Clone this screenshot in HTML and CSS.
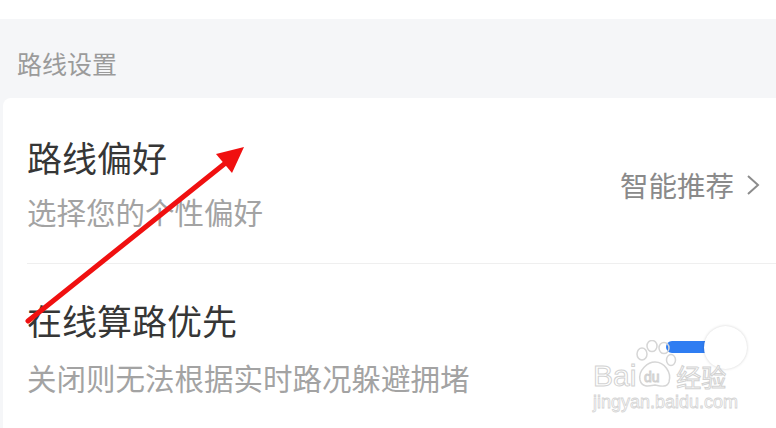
FILE: index.html
```html
<!DOCTYPE html>
<html lang="zh-CN">
<head>
<meta charset="utf-8">
<link rel="stylesheet" href="styles.css">
</head>
<body>
<div class="page">
  <div class="topband"></div>
  <div class="section-head">路线设置</div>
  <div class="card">
    <div class="row">
      <div class="texts">
        <div class="title">路线偏好</div>
        <div class="sub">选择您的个性偏好</div>
      </div>
      <div class="value">智能推荐<svg class="chev" width="14" height="24" viewBox="0 0 14 24"><path d="M2 3 L12 12 L2 21" fill="none" stroke="#8c8c8c" stroke-width="2"/></svg></div>
    </div>
    <div class="row last">
      <div class="texts">
        <div class="title">在线算路优先</div>
        <div class="sub">关闭则无法根据实时路况躲避拥堵</div>
      </div>
      <div class="toggle">
        <span class="track"></span>
        <span class="knob"></span>
      </div>
    </div>
  </div>

  <div class="watermark">
    <div class="wm-top"><span class="wm-bai">Bai</span><svg class="paw" width="46" height="50" viewBox="0 0 46 50"><g fill="none" stroke="#d6d6d6" stroke-width="1.5"><ellipse cx="10" cy="14" rx="5" ry="6"/><ellipse cx="20" cy="6" rx="5" ry="5.5"/><ellipse cx="32" cy="8" rx="5" ry="5.5"/><ellipse cx="39" cy="20" rx="4.5" ry="5.5"/><path d="M8 40 C6 30 16 22 23 22 C32 22 40 32 37 42 C35 48 28 46 23 45 C17 46 10 48 8 40 Z"/></g><text x="12" y="42" font-family="Liberation Sans, sans-serif" font-size="14" fill="#fff" stroke="#cfcfcf" stroke-width="1">du</text></svg><span class="wm-cn">经验</span></div>
    <div class="wm-url">jingyan.baidu.com</div>
  </div>

  <svg class="arrow" width="776" height="428" viewBox="0 0 776 428">
    <line x1="28" y1="321" x2="228" y2="161" stroke="#f01010" stroke-width="5" stroke-linecap="round"/>
    <polygon points="244,147 216,154 232,173" fill="#f01010"/>
  </svg>
</div>
</body>
</html>
```
FILE: styles.css
```css
* { box-sizing: border-box; }
html, body { margin: 0; padding: 0; }
body {
  width: 776px;
  height: 428px;
  overflow: hidden;
  background: #ffffff;
  font-family: "Noto Sans CJK SC", "Noto Sans", sans-serif;
}
.page {
  position: relative;
  width: 776px;
  height: 428px;
  background: #f5f6f8;
  overflow: hidden;
}
.topband {
  height: 19px;
  background: #ffffff;
}
.section-head {
  height: 79px;
  padding-left: 17px;
  display: flex;
  align-items: center;
  padding-top: 8px;
  font-size: 25px;
  color: #9b9b9b;
}
.card {
  margin-left: 3px;
  background: #ffffff;
  border-radius: 8px 0 0 0;
  padding-left: 24px;
  height: 340px;
}
.row {
  display: flex;
  align-items: center;
  height: 166px;
  border-bottom: 1px solid #efefef;
  padding-right: 14px;
}
.row.last { border-bottom: none; }
.texts {
  flex: 1;
  display: flex;
  flex-direction: column;
  gap: 17px;
}
.title {
  font-size: 35px;
  line-height: 40px;
  color: #363636;
  margin-top: 4px;
}
.sub {
  font-size: 29.5px;
  line-height: 34px;
  color: #a3a3a3;
}
.row.last .title { margin-top: 0px; }
.row.last .texts { gap: 20px; }
.value {
  display: flex;
  align-items: center;
  gap: 12px;
  font-size: 28.5px;
  color: #8a8a8a;
  margin-top: 8px;
  margin-right: 2px;
}
.chev { display: block; }
.toggle {
  position: relative;
  width: 82px;
  height: 44px;
  margin-right: 14px;
  margin-top: 2px;
}
.track {
  position: absolute;
  left: 0;
  top: 15px;
  width: 44px;
  height: 12px;
  background: #2f7df2;
  border-radius: 6px 0 0 6px;
}
.knob {
  position: absolute;
  left: 38px;
  top: 0;
  width: 43px;
  height: 43px;
  border-radius: 50%;
  background: #ffffff;
  box-shadow: 0 0 3px rgba(0,0,0,0.18);
}
.watermark {
  position: absolute;
  left: 593px;
  top: 340px;
  width: 150px;
  pointer-events: none;
}
.wm-top {
  display: flex;
  align-items: flex-end;
  height: 52px;
}
.wm-bai, .wm-cn {
  font-family: "Liberation Sans", sans-serif;
  font-size: 30px;
  line-height: 32px;
  color: rgba(255,255,255,0.7);
  -webkit-text-stroke: 1px #d2d2d2;
}
.wm-cn {
  font-family: "Noto Sans CJK SC", sans-serif;
  font-size: 25px;
  margin-left: -2px;
}
.paw { display: block; margin-left: -4px; margin-bottom: 2px; }
.wm-url {
  font-family: "Liberation Sans", sans-serif;
  font-size: 18px;
  line-height: 20px;
  color: rgba(255,255,255,0.6);
  -webkit-text-stroke: 0.8px #d4d4d4;
  margin-top: 0px;
}
.arrow {
  position: absolute;
  left: 0;
  top: 0;
  pointer-events: none;
}
```
